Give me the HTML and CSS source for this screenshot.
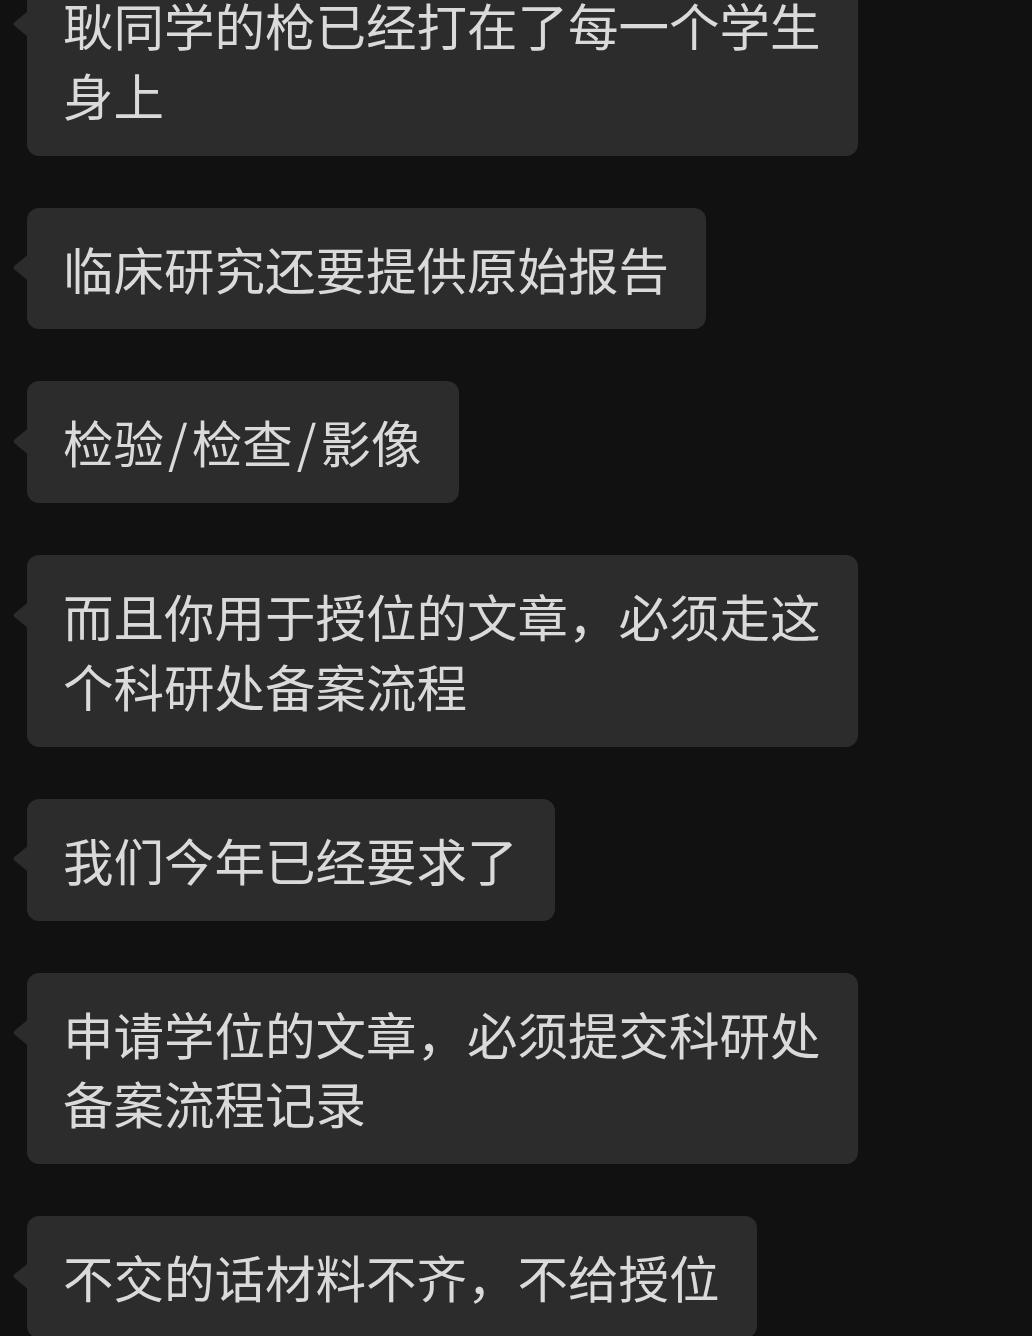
FILE: index.html
```
<!DOCTYPE html>
<html lang="zh-CN">
<head>
    <meta charset="UTF-8">
    <title>聊天记录</title>
    <link rel="stylesheet" href="styles.css">
</head>
<body>
    <div class="chat">
        <div class="bubble first">耿同学的枪已经打在了每一个学生身上</div>
        <div class="bubble">临床研究还要提供原始报告</div>
        <div class="bubble">检验<span class="sep">/</span>检查<span class="sep">/</span>影像</div>
        <div class="bubble">而且你用于授位的文章，必须走这个科研处备案流程</div>
        <div class="bubble">我们今年已经要求了</div>
        <div class="bubble">申请学位的文章，必须提交科研处备案流程记录</div>
        <div class="bubble">不交的话材料不齐，不给授位</div>
    </div>
</body>
</html>
```

FILE: styles.css
```
html, body {
    margin: 0;
    background: #111111;
    height: 100%;
    overflow: hidden;
}
.chat {
    display: flex;
    flex-direction: column;
    align-items: flex-start;
    gap: 52px;
    padding-left: 27px;
    font-family: "Noto Sans CJK SC", "Noto Sans", sans-serif;
}
.bubble {
    position: relative;
    box-sizing: border-box;
    max-width: 831px;
    padding: 26px 37px 26px 36px;
    background: #2c2c2c;
    border-radius: 12px;
    color: #dadada;
    font-size: 50.5px;
    line-height: 69.8px;
    word-break: break-all;
}
.bubble::before {
    content: "";
    position: absolute;
    left: -14px;
    top: 47px;
    width: 15px;
    height: 26px;
    background: #2c2c2c;
    clip-path: polygon(100% 0, 8% 44%, 4% 50%, 8% 56%, 100% 100%);
}
.sep {
    margin: 0 4px;
}
.first {
    margin-top: -36px;
}
```
